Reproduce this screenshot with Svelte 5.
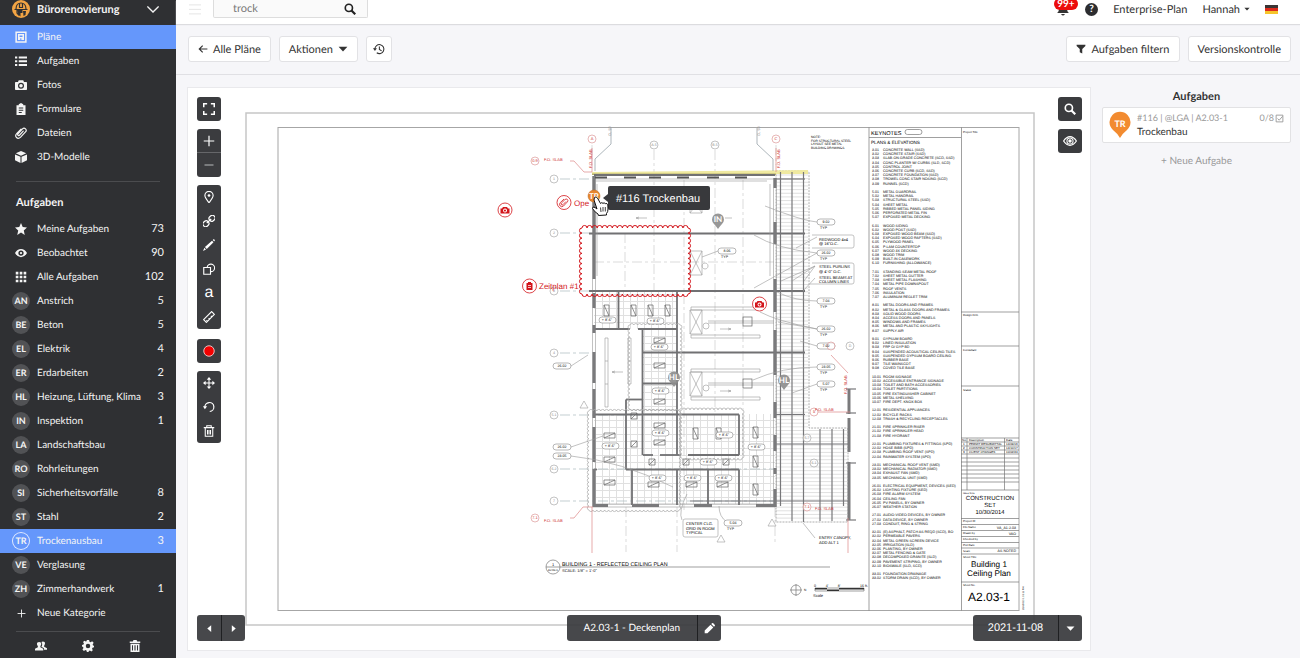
<script>
  let search = $state("trock");

  const nav = [
    { label: "Pläne", icon: "plan", active: true },
    { label: "Aufgaben", icon: "list" },
    { label: "Fotos", icon: "camera" },
    { label: "Formulare", icon: "clipboard" },
    { label: "Dateien", icon: "clip" },
    { label: "3D-Modelle", icon: "cube" },
  ];

  const filters = [
    { label: "Meine Aufgaben", icon: "star", count: 73 },
    { label: "Beobachtet", icon: "eye", count: 90 },
    { label: "Alle Aufgaben", icon: "grid", count: 102 },
  ];

  const categories = [
    { code: "AN", label: "Anstrich", count: 5 },
    { code: "BE", label: "Beton", count: 5 },
    { code: "EL", label: "Elektrik", count: 4 },
    { code: "ER", label: "Erdarbeiten", count: 2 },
    { code: "HL", label: "Heizung, Lüftung, Klima", count: 3 },
    { code: "IN", label: "Inspektion", count: 1 },
    { code: "LA", label: "Landschaftsbau" },
    { code: "RO", label: "Rohrleitungen" },
    { code: "SI", label: "Sicherheitsvorfälle", count: 8 },
    { code: "ST", label: "Stahl", count: 2 },
    { code: "TR", label: "Trockenausbau", count: 3, active: true },
    { code: "VE", label: "Verglasung" },
    { code: "ZH", label: "Zimmerhandwerk", count: 1 },
  ];

  const tools = [
    { name: "group-full", items: [["expand", "Vollbild"]] },
    { name: "group-zoom", items: [["plus", "Vergrößern"], ["minus", "Verkleinern"]] },
    {
      name: "group-draw",
      items: [
        ["pin", "Aufgabe"],
        ["link", "Verknüpfung"],
        ["pen", "Stift"],
        ["shapes", "Formen"],
        ["letter", "Text"],
        ["ruler", "Messen"],
      ],
    },
    { name: "group-color", items: [["record", "Farbe"]] },
    { name: "group-edit", items: [["move", "Bewegen"], ["undo", "Rückgängig"], ["trash", "Löschen"]] },
  ];

  // keynote schedule, an empty string is a blank line
  const keynotes = `3.01|CONCRETE WALL (SSD)
3.02|CONCRETE STAIR (SSD)
3.03|SLAB-ON-GRADE CONCRETE (SCD, SSD)
3.04|CONC PLANTER W/ CURBS (SLD, SCD)
3.05|CONTROL JOINT
3.06|CONCRETE CURB (SCD, SSD)
3.07|CONCRETE FOUNDATION (SSD)
3.08|TROWEL CONC STAIR NOSING (SCD)
3.09|RUNNEL (SCD)

5.01|METAL GUARDRAIL
5.02|METAL HANDRAIL
5.03|STRUCTURAL STEEL (SSD)
5.04|SHEET METAL
5.05|RIBBED METAL PANEL SIDING
5.06|PERFORATED METAL FIN
5.07|EXPOSED METAL DECKING

6.01|WOOD SIDING
6.02|WOOD POST (SSD)
6.03|EXPOSED WOOD BEAM (SSD)
6.04|EXPOSED WOOD RAFTERS (SSD)
6.05|PLYWOOD PANEL
6.06|P-LAM COUNTERTOP
6.07|WOOD 3X DECKING
6.08|WOOD TRIM
6.09|BUILT-IN CASEWORK
6.10|FURNISHING (ALLOWANCE)

7.01|STANDING SEAM METAL ROOF
7.02|SHEET METAL GUTTER
7.03|SHEET METAL FLASHING
7.04|METAL PIPE DOWNSPOUT
7.05|ROOF VENTS
7.06|INSULATION
7.07|ALUMINUM REGLET TRIM

8.01|METAL DOORS AND FRAMES
8.02|METAL & GLASS DOORS AND FRAMES
8.03|SOLID WOOD DOORS
8.04|ACCESS DOORS AND PANELS
8.05|WINDOWS AND FRAMES
8.06|METAL AND PLASTIC SKYLIGHTS
8.07|SUPPLY AIR

9.01|GYPSUM BOARD
9.02|LINED INSULATION
9.03|FRP O/ GYP BD
9.04|SUSPENDED ACOUSTICAL CEILING TILES
9.05|SUSPENDED GYPSUM BOARD CEILING
9.06|RUBBER BASE
9.07|TILE WAINSCOT
9.08|COVED TILE BASE

10.01|ROOM SIGNAGE
10.02|ACCESSIBLE ENTRANCE SIGNAGE
10.03|TOILET AND BATH ACCESSORIES
10.04|TOILET PARTITIONS
10.05|FIRE EXTINGUISHER CABINET
10.06|METAL SHELVING
10.07|FIRE DEPT. KNOX BOX

12.01|RESIDENTIAL APPLIANCES
12.02|BICYCLE RACKS
12.03|TRASH & RECYCLING RECEPTACLES

21.01|FIRE SPRINKLER RISER
21.02|FIRE SPRINKLER HEAD
21.03|FIRE HYDRANT

22.01|PLUMBING FIXTURES & FITTINGS (SPD)
22.02|HOSE BIBB (SPD)
22.03|PLUMBING ROOF VENT (SPD)
22.04|RAINWATER SYSTEM (SPD)

23.01|MECHANICAL ROOF VENT (SMD)
23.02|MECHANICAL RADIATOR (SMD)
23.04|EXHAUST FAN (SMD)
23.05|MECHANICAL UNIT (SMD)

26.01|ELECTRICAL EQUIPMENT, DEVICES (SED)
26.02|LIGHTING FIXTURE (SED)
26.03|FIRE ALARM SYSTEM
26.04|CEILING FAN
26.05|PV PANELS, BY OWNER
26.07|WEATHER STATION

27.01|AUDIO-VIDEO DEVICES, BY OWNER
27.02|DATA DEVICE, BY OWNER
27.03|CONDUIT, RING & STRING

32.01|(E) ASPHALT, PATCH AS REQD (SCD), BO
32.02|PERMEABLE PAVERS
32.04|METAL GREEN SCREEN DEVICE
32.05|IRRIGATION (SLD)
32.06|PLANTING, BY OWNER
32.07|METAL FENCING & GATE
32.08|DECOMPOSED GRANITE (SLD)
32.09|PAVEMENT STRIPING, BY OWNER
32.10|BIOSWALE (SLD, SCD)

33.01|FOUNDATION DRAINAGE
33.02|STORM DRAIN (SCD), BY OWNER`.split("\n").map((line) => line.split("|"));

  // x, y, size in fifths of a unit, text, anchor
  const labels = [
    [871, 135, 28, "KEYNOTES"],
    [871, 144, 23, "PLANS & ELEVATIONS"],
    [963, 133, 14, "Project Title"],
    [963, 316, 14, "Design Firm"],
    [963, 351, 14, "Consultant"],
    [963, 391, 14, "Status"],
    [963, 494, 12, "Issue Note"],
    [963, 522, 14, "Project ID"],
    [963, 528, 14, "File Name"],
    [963, 534, 14, "Drawn by"],
    [963, 540, 14, "Checked by"],
    [963, 546, 14, "Plot Date"],
    [963, 552, 14, "Scale"],
    [963, 558, 14, "Sheet Title"],
    [963, 586, 14, "Sheet No."],
    [1016, 529, 18, "VA_A1-2.03", "end"],
    [1016, 535, 18, "VAO", "end"],
    [1016, 552, 18, "AS NOTED", "end"],
    [990, 500, 30, "CONSTRUCTION", "middle"],
    [990, 507, 30, "SET", "middle"],
    [990, 514, 29, "10/30/2014", "middle"],
    [989, 567, 41, "Building 1", "middle"],
    [989, 576, 41, "Ceiling Plan", "middle"],
    [989, 601, 60, "A2.03-1", "middle"],
    [962, 441, 15, "No."],
    [969, 441, 15, "Description"],
    [1006, 441, 15, "Date"],
    [963, 445, 15, "1"],
    [969, 445, 15, "PERMIT RESUBMITTAL"],
    [1006, 445, 15, "14/09/16"],
    [963, 449, 15, "2"],
    [969, 449, 15, "CONSTRUCTION SET"],
    [1006, 449, 15, "14/10/17"],
    [963, 453, 15, "3"],
    [969, 453, 15, "CLIENT CHANGES"],
    [1006, 453, 15, "10/02/24"],
    [811, 138, 16, "NOTE:"],
    [811, 142, 16, "FOR STRUCTURAL STEEL"],
    [811, 145, 16, "LAYOUT SEE METAL"],
    [811, 149, 16, "BUILDING DRAWINGS"],
    [819, 241, 20, "REDWOOD 4x4"],
    [819, 245, 20, "@ 16\"O.C."],
    [819, 268, 20, "STEEL PURLINS"],
    [819, 273, 20, "@ 4'-0\" O.C."],
    [819, 279, 20, "STEEL BEAMS AT"],
    [819, 283, 20, "COLUMN LINES"],
    [686, 525, 20, "CENTER CLG."],
    [686, 530, 20, "GRID IN ROOM"],
    [686, 534, 20, "TYPICAL"],
    [819, 539, 20, "ENTRY CANOPY,"],
    [819, 544, 20, "ADD ALT 1"],
    [562, 566, 27, "BUILDING 1 - REFLECTED CEILING PLAN"],
    [562, 572, 20, "SCALE:  1/8\" = 1'-0\""],
    [553, 566, 20, "1", "middle"],
    [553, 571, 14, "A2.03-1", "middle"],
    [815, 587, 18, "0", "middle"],
    [827, 587, 18, "4'", "middle"],
    [839, 587, 18, "8'", "middle"],
    [864, 587, 18, "16 ft.", "middle"],
    [813, 597, 20, "Scale"],
    [804, 591, 16, "N"],
  ];

  const redLabels = [
    [544, 161, "F.O. SLAB"],
    [544, 522, "F.O. SLAB"],
    [815, 411, "F.O. SLAB"],
    [815, 510, "F.O. SLAB"],
  ];

  const bubbles = [
    [554, 179, "1"], [554, 233, "2"], [554, 291, "3"], [554, 353, "4"],
    [554, 415, "5.1"], [554, 469, "6.2"], [554, 501, "7"],
    [654, 145, "A.5"], [715, 145, "B.5"], [850, 346, "D"],
    [807, 438, "5.7"], [814, 463, "6.1"],
  ];
  const redBubbles = [
    [592, 139, "A"], [776, 139, "C"], [535, 161, "0.9"], [535, 518, "7.1"],
    [831, 346, ""], [814, 412, "5"], [807, 507, "7.1"],
  ];

  // bays and partitions: x1, y1, x2, y2
  const walls = [
    [589, 233.5, 805, 233.5], [589, 291, 805, 291], [642, 352.5, 805, 352.5], [594, 414.5, 739, 414.5],
    [594, 329, 630, 329], [638, 329, 677, 329], [618.5, 291, 618.5, 329], [677, 291, 677, 455],
    [642.5, 329, 642.5, 455], [642, 383.5, 677, 383.5], [626, 399.5, 643, 399.5],
    [626, 399.5, 626, 469.5], [643, 455, 653, 455], [660, 455, 681, 455], [688, 455, 739, 455],
    [739, 414.5, 739, 455], [626, 469.5, 739, 469.5], [632, 469.5, 632, 505],
    [677, 469.5, 677, 505], [708, 469.5, 708, 505], [739, 469.5, 739, 505], [594, 469.5, 597, 469.5],
    [594, 175, 775, 175],
  ];
  const piers = [
    [594, 176, 594, 279], [594, 293, 594, 308], [594, 325, 594, 333], [594, 352, 594, 383],
    [594, 389, 594, 418], [594, 427, 594, 462], [594, 469, 594, 507],
    [775, 178, 775, 188], [775, 222, 775, 244], [775, 279, 775, 312], [775, 330, 775, 375],
    [775, 402, 775, 418], [775, 435, 775, 451], [775, 468, 775, 474], [775, 489, 775, 507],
    [593, 505.5, 608, 505.5], [632, 505.5, 659, 505.5], [694, 505.5, 712, 505.5], [756, 505.5, 775, 505.5],
    [849, 389, 849, 414], [849, 418, 849, 452], [849, 462, 849, 520],
  ];
  const steel = [
    [776, 179, 805, 179], [776, 414.5, 805, 414.5], [776, 444, 848, 444], [690, 501, 850, 501],
    [780.5, 172, 780.5, 506], [792, 172, 792, 521], [803.5, 172, 803.5, 522], [820, 429, 820, 521],
    [832, 429, 832, 521], [843.5, 429, 843.5, 506], [846, 389, 856, 389], [846, 463, 856, 463],
    [846, 413, 856, 413], [846, 520, 856, 520],
  ];
  // outer wall faces where the piers are interrupted
  const faces = [
    [592.5, 176, 592.5, 507], [595.5, 176, 595.5, 507], [773.5, 178, 773.5, 507], [776.5, 178, 776.5, 507],
    [593, 504, 775, 504], [593, 507, 775, 507], [595, 179, 775, 179],
  ];
  const clerestory = [595, 624, 649, 677, 707, 735];

  const uprightLights = [
    [607, 311], [634, 311], [651, 311], [668, 311], [696, 434], [719, 434], [756, 433], [756, 462], [756, 490],
  ];
  const flatLights = [
    [660, 341], [660, 366], [660, 402], [660, 426], [660, 443], [610, 436], [610, 460], [610, 483],
    [654, 485], [692, 485], [723, 485],
  ];
  const diffusers = [[634, 416], [634, 444], [652, 462], [686, 462], [726, 462]];
  const units = [[696, 205, 16], [696, 263, 24], [696, 322, 24], [696, 384, 24]];
  const heights = [
    [607, 320], [655, 321], [659, 347], [660, 391], [660, 433], [610, 446], [657, 478], [692, 478],
    [724, 435], [756, 447], [708, 462], [723, 478],
  ];
  const tags = [
    [826, 222, "9.02", 1], [826, 253, "26.02", 1], [826, 301, "7.04", 1], [826, 329, "26.02", 1],
    [826, 346, "7.02"], [826, 367, "23.05", 1], [826, 384, "5.07", 1], [727, 251, "8.06", 1],
    [562, 366, "26.02"], [562, 447, "26.02"], [562, 456, "23.05"], [733, 523, "5.04", 1],
  ];

  const titleLines = [312, 346, 386, 490, 518.5, 524.5, 530.5, 536.5, 542.5, 548, 554, 582];
  const revisionLines = Array.from({ length: 12 }, (_, i) => 438 + i * 4);
  const hatch = Array.from({ length: 95 }, (_, i) => 175 + i * 3.65);

  function cloud(x, y, w, h, step) {
    const cols = Math.round(w / step);
    const rows = Math.round(h / step);
    const dx = w / cols;
    const dy = h / rows;
    const arc = (ax, ay) => `a${step / 2} ${step / 2} 0 0 1 ${ax} ${ay}`;
    return (
      `M${x} ${y}` + arc(dx, 0).repeat(cols) + arc(0, dy).repeat(rows) +
      arc(-dx, 0).repeat(cols) + arc(0, -dy).repeat(rows)
    );
  }
</script>

{#snippet icon(name)}
  <svg class="icon" viewBox="0 0 16 16" aria-hidden="true">
    {#if name === "plan"}
      <path fill="none" stroke="currentColor" stroke-width="2" d="M1.500 1.500h13v13h-13z" />
      <path fill="currentColor" fill-rule="evenodd" d="M4 4h8v8H8.500V9.500H7V12H4zM6 6v2h4V6z" />
    {:else if name === "list"}
      <path fill="currentColor" d="M0 2h3v2.500H0zM5 2h11v2.500H5zM0 7h3v2.500H0zM5 7h11v2.500H5zM0 12h3v2.500H0zM5 12h11v2.500H5z" />
    {:else if name === "camera"}
      <path fill="currentColor" fill-rule="evenodd" d="M5 1.500h6L12 4h3q1 0 1 1v8.500q0 1-1 1H1q-1 0-1-1V5q0-1 1-1h3zM8 5a4 4 0 1 0 0 8 4 4 0 0 0 0-8zm0 1.600a2.400 2.400 0 1 1 0 4.800 2.400 2.400 0 0 1 0-4.800z" />
    {:else if name === "clipboard"}
      <path fill="currentColor" fill-rule="evenodd" d="M2 3h3V1.500L8 0l3 1.500V3h3v13H2zm3 3v1.200h6V6zm0 3v1.200h6V9zm0 3v1.200h4V12z" />
    {:else if name === "clip"}
      <path fill="none" stroke="currentColor" stroke-width="1.600" stroke-linecap="round" d="M11 5.500 6 11q-1 1-2 0t0-2l6-6.500q2-2 4 0t0 4L7.500 13.500q-3 3-5.500.500t.500-5.500L8 3" />
    {:else if name === "cube"}
      <path fill="currentColor" d="M8 0l7 3-7 3.200L1 3zM0 4.600l7.300 3.200V16L0 12.400zM16 4.600 8.700 7.800V16l7.300-3.600z" />
    {:else if name === "star"}
      <path fill="currentColor" d="M8 0l2.300 5.400 5.700.600-4.300 3.900L13 16l-5-3.200L3 16l1.300-6.100L0 6l5.700-.600z" />
    {:else if name === "eye"}
      <path fill="currentColor" fill-rule="evenodd" d="M0 8q3-5.500 8-5.500T16 8q-3 5.500-8 5.500T0 8zm8-3.500a3.500 3.500 0 1 0 0 7 3.500 3.500 0 0 0 0-7zm0 2a1.500 1.500 0 1 1 0 3 1.500 1.500 0 0 1 0-3z" />
    {:else if name === "eye-line"}
      <path fill="none" stroke="currentColor" stroke-width="1.400" d="M.700 8Q4 3 8 3t7.300 5Q12 13 8 13T.700 8z" />
      <circle cx="8" cy="8" r="3.500" fill="none" stroke="currentColor" stroke-width="1.200" /><circle cx="8" cy="8" r="2" fill="currentColor" />
    {:else if name === "grid"}
      <path fill="currentColor" d="M1 1h3.500v3.500H1zM6.300 1h3.500v3.500H6.300zM11.500 1H15v3.500h-3.500zM1 6.300h3.500v3.500H1zM6.300 6.300h3.500v3.500H6.300zM11.500 6.300H15v3.500h-3.500zM1 11.500h3.500V15H1zM6.300 11.500h3.500V15H6.300zM11.500 11.500H15V15h-3.500z" />
    {:else if name === "people"}
      <path fill="currentColor" d="M5.500 2.500c4 0 3 4 1.700 5.500v1.500L11 11.500V14H0v-2.500L3.800 9.500V8C2.500 6.500 1.500 2.500 5.500 2.500zM10.500 2c4 0 3 4 1.700 5.500V9l3.800 2v2h-4v-2L8.500 9C10 7 10 4 8.500 2.500z" />
    {:else if name === "gear"}
      <path fill="currentColor" fill-rule="evenodd" d="M6.500 0h3l.500 2.300 1.500.700 2-1.300 2 2L14.200 6l.500 1.200L16 7.500v2l-2 .700-.600 1.300 1 2-1.800 1.800-2.100-1.200-1.300.500L8.700 16H6.500l-.500-2-1.500-.700-2 1.200-1.900-1.900 1.300-2-.500-1.300L0 8.700V6.500L2 6l.600-1.400-1.200-2 1.800-1.700L5 2l1-.400zM8 5a3 3 0 1 0 0 6 3 3 0 0 0 0-6z" />
    {:else if name === "bin"}
      <path fill="currentColor" fill-rule="evenodd" d="M1 2h4l1-2h4l1 2h4v2H1zM2 5h12v11H2zm2 2v7h1.300V7zm3.300 0v7h1.400V7zm3.400 0v7H12V7z" />
    {:else if name === "expand"}
      <path fill="none" stroke="currentColor" stroke-width="2" d="M1 5.500V1h4.500M10.500 1H15v4.500M15 10.500V15h-4.500M5.500 15H1v-4.500" />
    {:else if name === "plus"}
      <path fill="none" stroke="currentColor" stroke-width="1.600" d="M8 1v14M1 8h14" />
    {:else if name === "minus"}
      <path fill="none" stroke="#a4a5a7" stroke-width="1.600" d="M2 8h12" />
    {:else if name === "pin"}
      <path fill="none" stroke="currentColor" stroke-width="1.500" d="M8 15.500C5 11.500 2.500 9 2.500 6a5.500 5.500 0 0 1 11 0c0 3-2.500 5.500-5.500 9.500z" /><circle cx="8" cy="6" r="1.800" fill="currentColor" />
    {:else if name === "link"}
      <g fill="none" stroke="currentColor" stroke-width="1.600" transform="rotate(-42 8 8)">
        <rect x="-1.500" y="4.500" width="8" height="7" rx="3" /><rect x="9.500" y="4.500" width="8" height="7" rx="3" /><path d="M4 8h8" />
      </g>
    {:else if name === "pen"}
      <path fill="currentColor" d="M2.600 10.800 12 2.300 14 4.300 5 13.400zM1.900 11.800 4 13.900 0 16zM13 1.300 14.500 0 16 1.500 14.900 3.200z" />
    {:else if name === "pencil"}
      <path fill="currentColor" d="M1 11 9.500 2.500l4 4L5 15H1zM10.500 1.500 12 0q1 0 1.500.500l2 2q.500.500.500 1.500l-1.500 1.500z" />
    {:else if name === "shapes"}
      <path fill="none" stroke="currentColor" stroke-width="1.500" d="M1 6h9v9H1zM5.500 6a5 5 0 1 1 4.500 5.500" />
    {:else if name === "ruler"}
      <path fill="none" stroke="currentColor" stroke-width="1.500" d="M.800 11.500 11.500.800 15.200 4.500 4.500 15.200zM6 14l-1.500-1.500M9 11 7.500 9.500M12 8l-1.500-1.500" />
    {:else if name === "record"}
      <circle cx="8" cy="8" r="7" fill="#f30000" stroke="#f0d0d0" stroke-width="1.200" />
    {:else if name === "move"}
      <path fill="none" stroke="currentColor" stroke-width="1.400" d="M8 2v12M2 8h12" />
      <path fill="currentColor" d="M8 0l3 3.500H5zM8 16l3-3.500H5zM0 8l3.500-3v6zM16 8l-3.500-3v6z" />
    {:else if name === "undo"}
      <path fill="none" stroke="currentColor" stroke-width="1.600" d="M2.500 8.500A6 6 0 1 1 9 14" /><path fill="currentColor" d="M0 7h5.500L2.500 11z" />
    {:else if name === "trash"}
      <path fill="none" stroke="currentColor" stroke-width="1.400" d="M1 3.500h14M5 3V1h6v2M3 4v11h10V4M6 6.500v6M8 6.500v6M10 6.500v6" />
    {:else if name === "search"}
      <circle cx="6.500" cy="6.500" r="4.800" fill="none" stroke="currentColor" stroke-width="2.200" /><path stroke="currentColor" stroke-width="3" d="M10 10l5 5" />
    {:else if name === "back"}
      <path fill="none" stroke="currentColor" stroke-width="1.800" d="M15 8H2M7.500 2.500 2 8l5.500 5.500" />
    {:else if name === "history"}
      <path fill="none" stroke="currentColor" stroke-width="1.400" d="M2.500 8A6 6 0 1 1 5 13M8.500 4.500V8.500l3 2" /><path fill="currentColor" d="M0 7h5.200L2.600 10.500z" />
    {:else if name === "funnel"}
      <path fill="currentColor" d="M1 1h14v2l-5 5v7l-4-2V8L1 3z" />
    {:else if name === "caret"}
      <path fill="currentColor" d="M1 4.500h14L8 12z" />
    {:else if name === "left"}
      <path fill="currentColor" d="M11 2v12L4 8z" />
    {:else if name === "right"}
      <path fill="currentColor" d="M5 2v12l7-6z" />
    {:else if name === "chevron"}
      <path fill="none" stroke="currentColor" stroke-width="1.800" d="M.500 4.500 8 12l7.500-7.500" />
    {:else if name === "menu"}
      <path stroke="currentColor" stroke-width="1" d="M0 2.500h16M0 8.500h16M0 14.500h16" />
    {:else if name === "check"}
      <path fill="none" stroke="currentColor" stroke-width="1.600" d="M2 2h12v12H2zM4.500 8l3 3L13.500 4" />
    {/if}
  </svg>
{/snippet}

{#snippet wallLine(line, cls)}
  <line class={cls} x1={line[0]} y1={line[1]} x2={line[2]} y2={line[3]} />
{/snippet}

<div class="app">
  <aside class="sidebar">
    <button class="project">
      <svg class="logo" viewBox="0 0 18 18" aria-hidden="true">
        <circle cx="9" cy="9" r="9" fill="#f2a444" />
        <path fill="none" stroke="#2f3033" stroke-width="1.200" d="M2.500 9.500h13M4 9c0-8 10-8 10 0M7.500 3.500v4h3v-4M5 10v3l2 2.500" />
        <path fill="#2f3033" d="M5 10h5.500v3H8.500v3.500L6 14.500zM11 11h3l-.500 4-2 1z" />
      </svg>
      <b>Bürorenovierung</b>
      {@render icon("chevron")}
    </button>

    <nav>
      {#each nav as item}
        <a class="row" class:active={item.active} href="#{item.icon}">
          <span class="mark">{@render icon(item.icon)}</span>
          <span class="name">{item.label}</span>
        </a>
      {/each}
    </nav>

    <hr />
    <h2>Aufgaben</h2>

    <nav class="tasks">
      {#each filters as item}
        <a class="row" href="#{item.icon}">
          <span class="mark">{@render icon(item.icon)}</span>
          <span class="name">{item.label}</span>
          <span class="count">{item.count}</span>
        </a>
      {/each}
      {#each categories as item}
        <a class="row" class:active={item.active} href="#{item.code}">
          <span class="mark code">{item.code}</span>
          <span class="name">{item.label}</span>
          <span class="count">{item.count ?? ""}</span>
        </a>
      {/each}
      <a class="row add" href="#neu">
        <span class="mark">{@render icon("plus")}</span>
        <span class="name">Neue Kategorie</span>
      </a>
    </nav>

    <hr class="low" />
    <div class="foot">
      <button aria-label="Personen">{@render icon("people")}</button>
      <button aria-label="Einstellungen">{@render icon("gear")}</button>
      <button aria-label="Papierkorb">{@render icon("bin")}</button>
    </div>
  </aside>

  <main>
    <header>
      <button class="menu" aria-label="Menü">{@render icon("menu")}</button>
      <label class="search">
        <input type="text" aria-label="Suche" bind:value={search} />
        {@render icon("search")}
      </label>
      <button class="bell" aria-label="Benachrichtigungen">
        <svg viewBox="0 0 14 14" aria-hidden="true"><path fill="#333" d="M1 11q2-1 2-5 0-4 4-4t4 4q0 4 2 5zM5 12h4q-2 3-4 0z" /></svg>
        <span class="badge">99+</span>
      </button>
      <button class="help" aria-label="Hilfe">?</button>
      <a href="#plan">Enterprise-Plan</a>
      <button class="user">Hannah {@render icon("caret")}</button>
      <button class="flag" aria-label="Deutsch">
        <svg viewBox="0 0 13 9" aria-hidden="true"><path fill="#3a3434" d="M0 0h13v3H0z" /><path fill="#dd2b1c" d="M0 3h13v3H0z" /><path fill="#f6c52c" d="M0 6h13v3H0z" /></svg>
      </button>
    </header>

    <div class="toolbar">
      <button>{@render icon("back")} Alle Pläne</button>
      <button class="actions">Aktionen {@render icon("caret")}</button>
      <button class="square" aria-label="Verlauf">{@render icon("history")}</button>
      <span class="space"></span>
      <button>{@render icon("funnel")} Aufgaben filtern</button>
      <button>Versionskontrolle</button>
    </div>

    <div class="content">
      <section class="viewer">
        <svg class="sheet" viewBox="188 88 902 562" role="img" aria-label="A2.03-1 Deckenplan">
          <defs>
            <pattern id="tiles" width="7" height="7" patternUnits="userSpaceOnUse">
              <path d="M0 .5h7M.5 0v7" stroke="#e0e0e0" fill="none" />
            </pattern>
          </defs>

          <rect class="frame" x="246" y="113" width="788" height="512" />
          <rect class="frame inner" x="278" y="127.500" width="741" height="483" />

          <!-- ceiling grid -->
          <path fill="url(#tiles)" d="M594 291h83v123h98v91H594v-91h48v-85h-48z" />
          <path class="dash" d="M654 150v140M715 150v262M743 180v230M625 233v56M684 180v330M594 262h180M626 507v45M677 507v45M775 507v35M592 145v20M776 145v20" />
          <path class="dash blue" d="M560 179h32M560 233h30M560 291h30M560 353h30M560 415h80M560 469h215M560 501h215" />

          <!-- canopy -->
          {#each hatch as y}
            <line class="hatch" x1="776" y1={y} x2={y > 428 ? 847 : 808} y2={y} />
          {/each}
          <path class="dots" d="M776 171h31q2 0 2 2v255h37q2 0 2 2v90q0 2-2 2h-70V171" />
          <path fill="#efe9a0" d="M592 172l216-2v4H592z" />
          <path fill="#b5ae6c" d="M592 173.500h184v1.500H592z" />

          {#each faces as w}{@render wallLine(w, "thin")}{/each}
          {#each walls as w}{@render wallLine(w, "wall")}{/each}
          {#each steel as w}{@render wallLine(w, "steel")}{/each}
          {#each piers as w}{@render wallLine(w, "pier")}{/each}
          {#each clerestory as x}
            <path class="thick" d="M{x} 177.500h12" />
          {/each}
          <path class="thin" d="M595 181h172M597 184v92M770 184v92" />

          <!-- ducts -->
          {#each [322, 384] as y}
            <path class="thin" d="M691 {y - 15}h69v3h-69zM691 {y + 13}h69v3h-69zM708 {y - 1}h66M708 {y + 1}h66M720 {y + 7}h11l-3-1m3 1-3 1" />
            <rect class="fixture" x="743" y={y - 5} width="9" height="9" />
            <circle class="thin" cx="706" cy={y + 4} r="3" />
          {/each}
          <path class="thin" d="M605 338h3v69h-3zM605 361h3M605 384h3M628 338h3v46h-3zM628 361h3M623 372h-11l3-1m-3 1 3 1M647 218h-11l3-1m-3 1 3 1M725 218h7M705 263a3 3 0 1 0 .1 0" />

          {#each uprightLights as [x, y]}
            <path class="fixture" d="M{x - 3} {y - 6}h5v11h-5zl5 11" />
          {/each}
          {#each flatLights as [x, y]}
            <path class="fixture" d="M{x - 6} {y - 3}h11v5h-11zm0 5 11-5" />
          {/each}
          {#each diffusers as [x, y]}
            <path class="fixture" d="M{x - 3} {y - 3}h6v6h-6zm0 6 6-6" />
          {/each}
          {#each units as [x, y, h]}
            <path class="thin" d="M{x - 6} {y - h / 2}h12v{h}h-12zl12 {h}m0 {-h}-12 {h}" />
          {/each}

          <!-- revision clouds -->
          <path class="soft" d={cloud(630, 325, 50, 84, 4)} />
          <path class="soft" d={cloud(589, 411, 90, 99, 4)} />
          <path class="soft" d={cloud(682, 410, 60, 48, 4)} />
          <path class="soft" d="M812 235h40q2 0 2 2v9q0 2-2 2h-40M812 263h40q2 0 2 2v17q0 2-2 2h-42M685 519h31q2 0 2 2v14q0 2-2 2h-31q-2 0-2-2v-14q0-2 2-2zM588 408l-4-7-4 7zM725 542l-4-7-4 7zM776 526l-4-7-4 7z" />

          <!-- leaders -->
          <path class="thin" d="M817 222q-14-1-52-16M817 237 796 248M817 253q-40-4-63-18M817 253 754 288M815 266 781 281M815 266l-23 15M815 266l-11 15M815 278l-12 13M817 301q-22 0-40-9M817 329q-40-8-57-17M817 329l-39-7M817 346l-17-5M817 367q-35 0-64 13M817 384l-25 9M718 251l-16 6M571 366l17-11M571 447l32-11M571 456q50 5 102 31M727 522q-8-5-8-16M682 520q-4-8 5-26M815 538l-12-15" />
          <path class="redline" d="M570 161h4l10 11h8M570 518h4l9-11h10M592 148v24M592 507v46M776 148v24M831 355l17 18M818 412h32M848 518v35" />
          <path class="blueline" d="M611 128v16l-16 15v12M757 128v16l16 15v12" />

          {#each heights as [x, y]}
            <rect class="pill" x={x - 8} y={y - 3} width="17" height="6" rx="3" />
          {/each}
          {#each tags as [x, y]}
            <rect class="pill" x={x - 9} y={y - 3} width="18" height="6" rx="3" />
          {/each}
          {#each bubbles as [x, y]}<circle class="bubble" cx={x} cy={y} r="4" />{/each}
          {#each redBubbles as [x, y]}<circle class="bubble red" cx={x} cy={y} r="4" />{/each}

          <!-- title block -->
          <path class="block" d="M869 127.500v483M961.500 127.500v483M869 137.500h92M967 438v52M1004.500 438v52" />
          <rect class="block" x="905" y="129.500" width="17" height="5" rx="2.500" />
          {#each titleLines as y}<line class="block" x1="961" y1={y} x2="1019" y2={y} />{/each}
          {#each revisionLines as y}<line class="block" x1="961" y1={y} x2="1019" y2={y} />{/each}
          <circle class="block" cx="553" cy="567" r="7" />
          <path class="block" d="M546 567h284" />

          <!-- north arrow and scale bar -->
          <circle class="block" cx="796" cy="590" r="5" />
          <path class="block" d="M790 590h12M796 584v12M815 588h49v3h-49z" />
          <path stroke="#333" stroke-width="1.500" d="M815 588.700h12M839 588.700h25M827 590.300h12" />

          <g class="print" transform="scale(.2)">
            {#each keynotes as [code, note], i}
              {#if note}
                <text x="4360" y={755 + i * 21}>{code}</text>
                <text x="4415" y={755 + i * 21}>{note}</text>
              {/if}
            {/each}
            {#each labels as [x, y, size, text, anchor]}
              <text x={x * 5} y={y * 5} font-size={size} text-anchor={anchor ?? "start"}>{text}</text>
            {/each}
            {#each heights as [x, y]}
              <text class="mid" x={x * 5} y={y * 5 + 6}>+ 8'-6"</text>
            {/each}
            {#each tags as [x, y, text, typ]}
              <text class="mid" x={x * 5} y={y * 5 + 6}>{text}</text>
              {#if typ}<text class="mid" x={x * 5 - 12} y={y * 5 + 34}>TYP</text>{/if}
            {/each}
            {#each bubbles as [x, y, text]}
              <text class="mid grey" x={x * 5} y={y * 5 + 6}>{text}</text>
            {/each}
            {#each redBubbles as [x, y, text]}
              <text class="mid red" x={x * 5} y={y * 5 + 6}>{text}</text>
            {/each}
            {#each redLabels as [x, y, text]}
              <text class="red" x={x * 5} y={y * 5}>{text}</text>
            {/each}
            <text class="red" transform="translate(2962 840) rotate(-90)">F.O. SLAB</text>
            <text class="red" transform="translate(3902 840) rotate(-90)">F.O. SLAB</text>
            <text class="red" transform="translate(4236 1970) rotate(-90)">F.O. SLAB</text>
            <text class="grey" transform="translate(3055 680) rotate(-90)">CL 50</text>
            <text class="grey" transform="translate(3800 680) rotate(-90)">CL 50</text>
            <text class="stamp" transform="translate(5120 3050) rotate(-90)">2/24/2015 1:52:11 PM</text>
          </g>

          <!-- markup on the plan -->
          <path class="cloud" d={cloud(582, 228, 106, 66, 5)} />
          {#each [[505, 210], [759.5, 304]] as [x, y]}
            <g transform="translate({x} {y})" fill="#d3151b">
              <circle class="ring" r="7" />
              <path fill-rule="evenodd" d="M-2-3h4l1 1.500h1.500v5h-9v-5H-3zM0-1.500a2 2 0 1 0 .1 0zM0-.500a1 1 0 1 1-.1 0z" />
            </g>
          {/each}
          <g transform="translate(529.500 286)" fill="#d3151b">
            <circle class="ring" r="7" />
            <path fill-rule="evenodd" d="M-3-3h1.500V-4h3v1H3v7h-6zM-1.500-1v.8h3V-1zM-1.500 1v.8h3V1z" />
          </g>
          <g transform="translate(564 202.500)">
            <circle class="ring" r="7" />
            <path fill="none" stroke="#d3151b" stroke-width=".8" d="M2-1-1 2.200q-1 .8-1.600 0t0-1.600L1-3q1.300-1 2.400 0t0 2.400L-.500 3.500q-1.800 1.600-3.300 0t0-3.300L0-3.500" />
          </g>
          <text class="note" x="574" y="206">Ope</text>
          <text class="note" x="539" y="289">Zeitplan #1</text>

          {#each [[718, 220, "IN"], [674, 378, "HL"], [784, 381, "HL"]] as [x, y, code]}
            <path fill="#8c8c8c" fill-opacity=".9" d="M{x} {y + 9}q-2-3-4-5a6 6 0 1 1 8 0q-2 2-4 5z" />
            <text class="pincode" {x} y={y + 2}>{code}</text>
          {/each}
          <circle cx="594" cy="196" r="6" fill="#e8862f" stroke="#b96a22" stroke-width=".5" />
          <text class="pincode" x="594" y="199">TR</text>

          <path fill="#38393c" d="M610 186h98q2 0 2 2v20q0 2-2 2h-98q-2 0-2-2v-6l-5-4 5-4v-6q0-2 2-2z" />
          <text class="tip" x="616" y="202">#116 Trockenbau</text>

          <!-- pointer -->
          <path fill="#fff" stroke="#111" stroke-width="1" stroke-linejoin="round" d="M594.500 197.500q1.500-1.500 3 .500l3 5.500q1-1.500 2.500-.200 1.200-1 2.300.300 2-.700 2.500 1.200l.200 4.200q0 3-1.500 4.500v1.500l-8 .500-.500-1.500q-3-1.500-5.500-5.500 0-2.500 2.500-1l2 1.500-3-9z" />
          <path stroke="#111" stroke-width=".8" d="M600.500 207.500l.500 4.500M603 207v4.500M605.300 207v4.500" />
        </svg>

        <div class="tools">
          {#each tools as group}
            <div class="group {group.name}">
              {#each group.items as [name, title]}
                <button aria-label={title}>
                  {#if name === "letter"}a{:else}{@render icon(name)}{/if}
                </button>
              {/each}
            </div>
          {/each}
        </div>

        <div class="tools right">
          <div class="group"><button aria-label="Suchen">{@render icon("search")}</button></div>
          <div class="group"><button class="wide" aria-label="Ebenen">{@render icon("eye-line")}</button></div>
        </div>

        <div class="bar pager">
          <button aria-label="Vorheriger Plan">{@render icon("left")}</button>
          <button aria-label="Nächster Plan">{@render icon("right")}</button>
        </div>
        <div class="bar title">
          <button class="text">A2.03-1 - Deckenplan</button>
          <button aria-label="Umbenennen">{@render icon("pencil")}</button>
        </div>
        <div class="bar date">
          <button class="text">2021-11-08</button>
          <button aria-label="Version wählen">{@render icon("caret")}</button>
        </div>
      </section>

      <section class="panel">
        <h2>Aufgaben</h2>
        <a class="card" href="#116">
          <svg class="pin" viewBox="0 0 22 28" aria-hidden="true">
            <path fill="#f28b30" d="M11 27Q8 22 4 19a10.500 10.500 0 1 1 14 0q-4 3-7 8z" />
            <text x="11" y="16">TR</text>
          </svg>
          <span class="info">
            <span class="meta"><span>#116 | @LGA | A2.03-1</span><span class="todo">0/8{@render icon("check")}</span></span>
            <span>Trockenbau</span>
          </span>
        </a>
        <button class="new">+ Neue Aufgabe</button>
      </section>
    </div>
  </main>
</div>

<style>
  :global(body) {
    background: #f6f6f9;
  }

  .app {
    display: grid;
    grid-template-columns: 176px 1fr;
    min-height: 100vh;
    font: 11px/17px Lato, sans-serif;
    text-rendering: geometricPrecision;
    color: #333;
  }

  button, input {
    font: inherit;
    color: inherit;
    text-rendering: inherit;
    background: none;
    border: 0;
    padding: 0;
    margin: 0;
  }

  a {
    color: inherit;
    text-decoration: none;
  }

  h2 {
    font-size: 11px;
    margin: 0;
  }

  .icon {
    width: 12px;
    height: 12px;
    flex: none;
    display: block;
  }

  .sidebar {
    background: #2f3033;
    color: #f4f4f4;
    display: flex;
    flex-direction: column;
  }

  .project {
    display: flex;
    align-items: center;
    height: 25px;
    padding: 0 17px 7px 12px;
    gap: 7px;
    text-align: left;
  }

  .project b {
    flex: 1;
  }

  .logo {
    width: 18px;
    height: 18px;
  }

  .row {
    display: flex;
    align-items: center;
    height: 24px;
    padding: 0 12px;
    gap: 7px;
    font-size: 10px;
    line-height: 18px;
  }

  .row.active {
    background: #6597fb;
  }

  .name {
    flex: 1;
    white-space: nowrap;
  }

  .count {
    font-size: 11px;
  }

  .mark {
    width: 18px;
    height: 18px;
    display: grid;
    place-items: center;
  }

  .code {
    border-radius: 50%;
    background: #515255;
    font-size: 9px;
    font-weight: bold;
  }

  .active .code {
    background: none;
    box-shadow: inset 0 0 0 1px #dfe8ff;
  }

  .add .icon {
    width: 9px;
    height: 9px;
  }

  hr {
    width: 144px;
    margin: 12px 0 12px 16px;
    border: 0;
    border-top: 1px solid #4b4c4f;
  }

  .sidebar h2 {
    padding: 0 16px 6px;
  }

  hr.low {
    margin: 6px 0 8px 16px;
  }

  .foot {
    display: flex;
    justify-content: space-around;
    padding: 0 18px 5px;
  }

  main {
    display: flex;
    flex-direction: column;
    min-width: 0;
  }

  header {
    display: flex;
    align-items: center;
    gap: 15px;
    height: 24px;
    box-sizing: border-box;
    padding: 0 22px 6px 13px;
    background: #fff;
    box-shadow: 0 1px 1px #dcdcdf;
    z-index: 1;
  }

  .menu {
    color: #ddd;
    margin-right: -3px;
  }

  .search {
    display: flex;
    align-items: center;
    width: 153px;
    height: 17px;
    border: 1px solid #ddd;
    border-top: 0;
    border-radius: 0 0 2px 2px;
    margin-right: auto;
    background: #fafafa;
  }

  .search input {
    flex: 1;
    min-width: 0;
    padding-left: 19px;
    color: #777;
    outline: 0;
  }

  .search .icon {
    margin-right: 11px;
    color: #222;
  }

  .bell {
    position: relative;
    width: 14px;
    height: 14px;
  }

  .bell svg, .flag svg {
    display: block;
    width: 100%;
  }

  .badge {
    position: absolute;
    left: -2px;
    top: -4px;
    padding: 0 3px;
    border-radius: 6px;
    background: #ec0c0c;
    color: #fff;
    font-size: 10px;
    font-weight: bold;
    line-height: 12px;
  }

  .help {
    width: 13px;
    height: 13px;
    border-radius: 50%;
    background: #2c2d30;
    color: #fff;
    font-weight: bold;
    font-size: 10px;
    line-height: 13px;
  }

  .user {
    display: flex;
    align-items: center;
    gap: 4px;
  }

  .user .icon {
    width: 6px;
    height: 6px;
  }

  .flag {
    width: 13px;
  }

  .toolbar {
    display: flex;
    gap: 8px;
    padding: 12px 9px 12px 12px;
    border-bottom: 1px solid #e0e0e4;
  }

  .toolbar button {
    display: flex;
    align-items: center;
    justify-content: center;
    gap: 5px;
    height: 26px;
    padding: 0 9px;
    background: #fff;
    border: 1px solid #e2e2e5;
    border-radius: 3px;
  }

  .toolbar .square {
    width: 26px;
    padding: 0;
  }

  .toolbar .icon {
    width: 10px;
    height: 10px;
  }

  .toolbar .square .icon {
    width: 12px;
    height: 12px;
  }

  .space {
    flex: 1;
  }

  .content {
    flex: 1;
    display: flex;
    gap: 12px;
    padding: 13px 9px 8px 12px;
  }

  .viewer {
    position: relative;
    flex: 1;
    min-width: 0;
    background: #fff;
    outline: 1px solid #e9e9ec;
  }

  .sheet {
    position: absolute;
    width: 100%;
    height: 100%;
  }

  .tools {
    position: absolute;
    left: 9px;
    top: 9px;
    display: flex;
    flex-direction: column;
    gap: 8px;
    color: #fff;
  }

  .tools.right {
    left: auto;
    right: 8px;
  }

  .group {
    display: flex;
    flex-direction: column;
    background: #3b3c3f;
    border-radius: 3px;
  }

  .group button {
    width: 24px;
    height: 24px;
    display: grid;
    place-items: center;
    font: 16px/20px "Liberation Sans", sans-serif;
  }

  .group .wide .icon {
    width: 14px;
    height: 14px;
  }

  .group-zoom button + button {
    box-shadow: 0 -1px #66676a;
  }

  .group-color {
    margin-top: 2px;
  }

  .bar {
    position: absolute;
    bottom: 9px;
    display: flex;
    height: 26px;
    background: #3a3b3eee;
    border-radius: 3px;
    color: #fff;
  }

  .bar button {
    width: 24px;
    display: grid;
    place-items: center;
  }

  .bar button + button {
    border-left: 1px solid #1f2022;
  }

  .bar .text {
    width: auto;
    flex: 1;
  }

  .bar .icon {
    width: 9px;
    height: 9px;
  }

  .pager {
    left: 9px;
  }

  .title {
    left: 42%;
    width: 154px;
  }

  .title .text {
    font-size: 10px;
  }

  .title .icon {
    width: 11px;
    height: 11px;
  }

  .date {
    right: 8px;
    width: 109px;
  }

  .date .text {
    font-family: "Liberation Sans", sans-serif;
  }

  .panel {
    width: 189px;
    text-align: center;
  }

  .card {
    display: flex;
    gap: 6px;
    margin: 2px 0 9px;
    padding: 3px 6px 3px 6px;
    background: #fff;
    border: 1px solid #e2e2e4;
    border-radius: 2px;
    text-align: left;
  }

  .pin {
    width: 22px;
    height: 28px;
  }

  .pin text {
    fill: #fff;
    font-size: 9px;
    font-weight: bold;
    text-anchor: middle;
  }

  .info {
    flex: 1;
    display: flex;
    flex-direction: column;
    font-size: 10px;
    line-height: 14px;
  }

  .meta {
    display: flex;
    justify-content: space-between;
    color: #999;
    font-size: 9px;
  }

  .todo {
    display: flex;
    align-items: center;
    gap: 1px;
  }

  .todo .icon {
    width: 9px;
    height: 9px;
  }

  .new {
    color: #999;
    font-size: 10px;
  }

  /* drawing */
  .frame, .block, .thin, .fixture, .soft, .dash, .dots, .redline, .blueline, .cloud {
    fill: none;
  }

  .frame {
    stroke: #c6c6c6;
    stroke-width: 1.5;
  }

  .inner {
    stroke: #a6a6a6;
    stroke-width: 1;
  }

  .block {
    stroke: #777;
    stroke-width: .7;
  }

  .dash {
    stroke: #ccc;
    stroke-width: .7;
    stroke-dasharray: 10 3 3 3;
  }

  .blue {
    stroke: #a9b9bd;
  }

  .hatch {
    stroke: #d2d2d2;
    stroke-width: .7;
  }

  .dots {
    stroke: #999;
    stroke-width: .8;
    stroke-dasharray: 2 1;
  }

  .wall {
    stroke: #717173;
    stroke-width: 1.8;
  }

  .steel {
    stroke: #77777a;
    stroke-width: 1.2;
  }

  .pier {
    stroke: #7a7a7c;
    stroke-width: 3;
  }

  .thick {
    stroke: #555;
    stroke-width: 2;
  }

  .thin {
    stroke: #999;
    stroke-width: .6;
  }

  .fixture {
    stroke: #666;
    stroke-width: .7;
  }

  .soft {
    stroke: #aaa;
    stroke-width: .7;
  }

  .redline {
    stroke: #d88;
    stroke-width: .7;
  }

  .blueline {
    stroke: #8a969e;
    stroke-width: .7;
  }

  .pill {
    fill: #fff;
    stroke: #888;
    stroke-width: .6;
  }

  .bubble {
    fill: #fff;
    fill-opacity: .6;
    stroke: #aaa;
    stroke-width: .7;
  }

  .bubble.red {
    stroke: #d99;
  }

  .cloud {
    stroke: #d3151b;
    stroke-width: 1;
  }

  .ring {
    fill: #fff;
    stroke: #d3151b;
    stroke-width: .8;
  }

  .print {
    font: 18px "Liberation Sans", sans-serif;
    fill: #000;
  }

  .print .mid {
    font-size: 18px;
    text-anchor: middle;
  }

  .print .grey {
    fill: #888;
  }

  .print .red {
    fill: #c33;
    font-size: 20px;
  }

  .print .stamp {
    font-size: 12px;
  }

  .note {
    font: 8px "Liberation Sans", sans-serif;
    fill: #d3151b;
  }

  .pincode {
    font: bold 8px Lato, sans-serif;
    fill: #fff;
    text-anchor: middle;
  }

  .tip {
    font: 11px "Liberation Sans", sans-serif;
    fill: #fff;
  }
</style>
